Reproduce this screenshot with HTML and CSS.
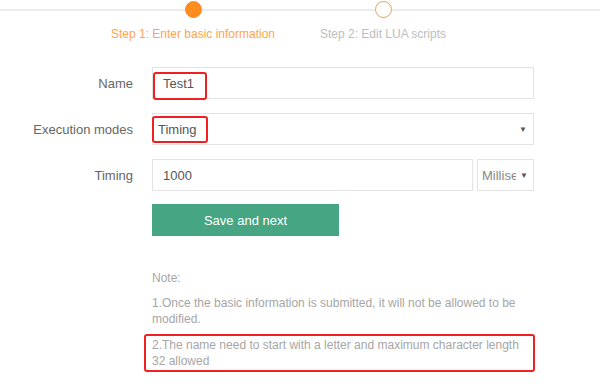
FILE: index.html
```html
<!DOCTYPE html>
<html>
<head>
<meta charset="utf-8">
<link rel="stylesheet" href="styles.css">
</head>
<body>
<div class="steps">
  <div class="step active">
    <span class="dot"></span>
    <span class="step-label">Step 1: Enter basic information</span>
  </div>
  <div class="step">
    <span class="dot"></span>
    <span class="step-label">Step 2: Edit LUA scripts</span>
  </div>
</div>

<div class="form">
  <div class="row">
    <label class="label">Name</label>
    <div class="field">
      <div class="control input">Test1</div>
      <span class="mark mark-name"></span>
    </div>
  </div>
  <div class="row">
    <label class="label">Execution modes</label>
    <div class="field">
      <div class="control select"><span class="sel-text">Timing</span><span class="caret">▼</span></div>
      <span class="mark mark-mode"></span>
    </div>
  </div>
  <div class="row">
    <label class="label">Timing</label>
    <div class="field split">
      <div class="control input grow">1000</div>
      <div class="control select unit"><span class="sel-text clip">Millisecond</span><span class="caret">▼</span></div>
    </div>
  </div>
  <div class="row actions">
    <span class="label"></span>
    <button class="btn">Save and next</button>
  </div>

  <div class="notes">
    <p class="note-title">Note:</p>
    <p class="note">1.Once the basic information is submitted, it will not be allowed to be modified.</p>
    <p class="note boxed">2.The name need to start with a letter and maximum character length 32 allowed</p>
  </div>
</div>
</body>
</html>
```

FILE: styles.css
```css
html, body {
  margin: 0;
  padding: 0;
  background: #fff;
}
body {
  font-family: "Liberation Sans", Arial, sans-serif;
  width: 600px;
  height: 390px;
  overflow: hidden;
}

.steps {
  position: relative;
  display: flex;
  padding: 1px 0 0 98px;
}
.steps::before {
  content: "";
  position: absolute;
  left: 0;
  right: 0;
  top: 9px;
  height: 2px;
  background: #ececec;
}
.step {
  width: 190px;
  display: flex;
  flex-direction: column;
  align-items: center;
}
.dot {
  position: relative;
  z-index: 1;
  width: 17px;
  height: 17px;
  box-sizing: border-box;
  border-radius: 50%;
  border: 1px solid #ff9a3c;
  background: #fff;
}
.step.active .dot {
  background: #ff8c1f;
  border-color: #ff8c1f;
}
.step-label {
  margin-top: 8px;
  font-size: 12px;
  line-height: 16px;
  color: #bdbdbd;
  white-space: nowrap;
}
.step.active .step-label {
  color: #ffa449;
}

.form {
  margin-top: 25px;
}
.row {
  display: flex;
  align-items: center;
  margin-bottom: 14px;
}
.label {
  width: 133px;
  margin-right: 19px;
  text-align: right;
  font-size: 13px;
  color: #666;
  flex: none;
}
.field {
  position: relative;
  width: 382px;
  display: flex;
  gap: 4px;
}
.control {
  box-sizing: border-box;
  height: 32px;
  border: 1px solid #e3e3e3;
  font-size: 13px;
  color: #555;
  display: flex;
  align-items: center;
  background: #fff;
}
.input {
  width: 100%;
  padding-left: 10px;
}
.input.grow {
  flex: 1;
  width: auto;
}
.select {
  width: 100%;
  padding: 0 6px 0 5px;
  justify-content: space-between;
}
.select.unit {
  width: 57px;
  flex: none;
  padding: 0 5px 0 4px;
  color: #888;
}
.sel-text.clip {
  width: 34px;
  overflow: hidden;
  white-space: nowrap;
}
.caret {
  font-size: 8px;
  color: #555;
}
.mark {
  position: absolute;
  border: 2px solid #f02020;
  border-radius: 3px;
  pointer-events: none;
}
.mark-name {
  left: 1px;
  top: 5px;
  width: 50px;
  height: 24px;
}
.mark-mode {
  left: 0;
  top: 3px;
  width: 52px;
  height: 23px;
}

.actions {
  margin-top: -1px;
}
.btn {
  width: 187px;
  height: 32px;
  border: none;
  background: #46a582;
  color: #fff;
  font-family: "Liberation Sans", Arial, sans-serif;
  font-size: 13px;
  padding: 0;
}

.notes {
  margin-left: 152px;
  width: 375px;
  margin-top: 34px;
  font-size: 12px;
  line-height: 16px;
  color: #a6a6a6;
}
.notes p {
  margin: 0;
}
.note-title {
  margin-bottom: 9px !important;
}
.note {
  margin-bottom: 7px !important;
}
.note.boxed {
  margin-left: -8px !important;
  width: 381px;
  border: 2px solid #f02020;
  border-radius: 3px;
  padding: 1px 0 1px 6px;
}
```
